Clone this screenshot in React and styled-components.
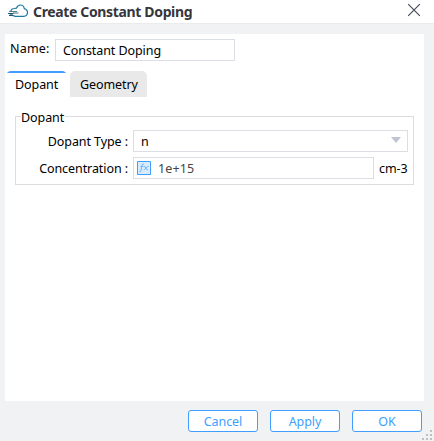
import React from "react";
import styled, { createGlobalStyle } from "styled-components";

const GlobalStyle = createGlobalStyle`
  * { box-sizing: border-box; }
  body { margin: 0; background: #f0f2f4; }
  button, input { font: inherit; letter-spacing: inherit; }
`;

const Dialog = styled.div`
  width: 434px;
  height: 441px;
  display: flex;
  flex-direction: column;
  position: relative;
  overflow: hidden;
  background: #f0f2f4;
  color: #000;
  font: 12.5px/20px "Noto Sans", "Open Sans", sans-serif;
  letter-spacing: -0.08px;
  white-space: nowrap;
`;

const TitleBar = styled.header`
  height: 24px;
  flex: none;
  display: flex;
  align-items: flex-start;
  padding: 0 13px 0 8px;
  background: #fff;
  border-bottom: 1px solid #e9ebed;
`;

const Title = styled.h1`
  margin: 2px auto 0 4px;
  font-size: 14px;
  line-height: 20px;
  font-weight: 700;
  letter-spacing: -0.35px;
  color: #36363d;
`;

const CloudIcon = styled.svg`
  margin-top: 4px;
  width: 21px;
  height: 14px;
`;

const CloseButton = styled.button`
  width: 14px;
  height: 14px;
  margin-top: 3px;
  padding: 0;
  border: 0;
  background: none;
  display: flex;
`;

const Panel = styled.main`
  flex: none;
  width: 419px;
  height: 367px;
  margin: 10px 0 0 5px;
  padding-top: 5px;
  background: #fff;
`;

const NameRow = styled.div`
  display: flex;
  padding-left: 5px;
`;

const NameLabel = styled.label`
  width: 45px;
  letter-spacing: 0.2px;
`;

const Field = styled.div`
  width: ${(p) => p.$width}px;
  height: 22px;
  display: flex;
  align-items: center;
  padding: ${(p) => p.$pad || "2px 7px 0"};
  border: 1px solid #dcdee6;
  background: #fff;
  color: ${(p) => p.$color || "#000"};
`;

const Value = styled.span`
  padding-top: 2px;
  letter-spacing: 0.15px;
`;

const TabList = styled.div`
  display: flex;
  gap: 3px;
  margin: 10px 0 0 1px;
`;

const Tab = styled.div`
  width: ${(p) => p.$width}px;
  height: 26px;
  padding: 4px 0 0 ${(p) => (p.$active ? 9 : 10)}px;
  border-radius: 5px 5px 0 0;
  overflow: hidden;
  background: ${(p) =>
    p.$active ? "linear-gradient(#409eff 2px, #fff 2px)" : "#e9e9e9"};
`;

const Group = styled.fieldset`
  width: 399px;
  height: 74px;
  margin: 14px 0 0 10px;
  padding: 0 5px 0 0;
  border: 1px solid #dcdcde;
`;

const Legend = styled.legend`
  height: 11px;
  margin-left: 5px;
  padding: 0 1px 0 0;
  line-height: 13px;
`;

const FormRow = styled.div`
  display: flex;
  align-items: center;
  height: 22px;
  margin-top: ${(p) => p.$top}px;
`;

const RowLabel = styled.label`
  width: 112px;
  margin-right: 5px;
  padding-top: 2px;
  text-align: right;
`;

const Arrow = styled.svg`
  width: 10px;
  height: 6px;
  margin: -5px 0 0 auto;
`;

const FormulaIcon = styled.svg`
  width: 14px;
  height: 14px;
  margin-right: 7px;
`;

const Unit = styled.span`
  margin-left: 5px;
  padding-top: 2px;
`;

const Footer = styled.footer`
  display: flex;
  gap: 12px;
  justify-content: flex-end;
  padding: 9px 12px 0 0;
`;

const Button = styled.button`
  width: 70px;
  height: 22px;
  padding: 1px 0 0;
  border: 1px solid #409eff;
  border-radius: 3px;
  background: #fff;
  color: #409eff;
  line-height: 19px;
`;

const Grip = styled.svg`
  position: absolute;
  right: 2px;
  bottom: 1px;
  width: 10px;
  height: 10px;
`;

export default function App() {
  return (
    <>
      <GlobalStyle />
      <Dialog>
        <TitleBar>
          <CloudIcon viewBox="0 0 21 14" fill="none">
            <path
              d="M2.8 7.2Q3.4 4.6 6.2 4.5L8.4 4.2Q9.6 1 12.4 1Q15.6 1 16.3 4.6Q19.6 5.4 19.5 8.8Q19.2 12.3 15.8 12.3H7.2L2.4 10.6"
              stroke="#1e78a5"
              strokeWidth="1.2"
            />
            <path d="M1 7.5H9" stroke="#4e8299" strokeWidth="1" />
            <path d="M0 9.5H6M1 11.4H5" stroke="#245268" strokeWidth="1.1" />
            <path d="M5 9H10.5" stroke="#8299a6" strokeWidth="1.4" />
          </CloudIcon>
          <Title>Create Constant Doping</Title>
          <CloseButton aria-label="Close">
            <svg width="14" height="14" viewBox="0 0 14 14">
              <path d="M1.2 1.2 12.8 12.8M12.8 1.2 1.2 12.8" stroke="#444b59" strokeWidth="1.2" />
            </svg>
          </CloseButton>
        </TitleBar>
        <Panel>
          <NameRow>
            <NameLabel>Name:</NameLabel>
            <Field $width={180}>Constant Doping</Field>
          </NameRow>
          <TabList>
            <Tab $width={61} $active>Dopant</Tab>
            <Tab $width={77}>Geometry</Tab>
          </TabList>
          <Group>
            <Legend>Dopant</Legend>
            <FormRow $top={8}>
              <RowLabel>Dopant Type :</RowLabel>
              <Field $width={275} $pad="2px 6px 0 7px">
                n
                <Arrow viewBox="0 0 10 6">
                  <path d="M0 0H10L5 6Z" fill="#bfc4d0" />
                </Arrow>
              </Field>
            </FormRow>
            <FormRow $top={5}>
              <RowLabel>Concentration :</RowLabel>
              <Field $width={241} $pad="0 3px" $color="#444">
                <FormulaIcon viewBox="0 0 14 14" fill="none">
                  <path d="M.5.5H13.5V13.5H.5Z" fill="#d9ecff" stroke="#409eff" />
                  <path
                    d="M7 3Q5.6 2.3 5 4.5L4 9.5Q3.6 11.5 2.4 10.8M3.4 5.5H6.4M7 5.5Q8.2 5 8.8 7T10.8 9M11.6 5.5Q10.6 5 9 7T6.8 9"
                    stroke="#6fb4fa"
                    strokeWidth="1"
                  />
                </FormulaIcon>
                <Value>1e+15</Value>
              </Field>
              <Unit>cm-3</Unit>
            </FormRow>
          </Group>
        </Panel>
        <Footer>
          <Button>Cancel</Button>
          <Button>Apply</Button>
          <Button>OK</Button>
        </Footer>
        <Grip viewBox="0 0 10 10" fill="#bfbfbf">
          <path d="M8 0h2v2H8zM4 4h2v2H4zM8 4h2v2H8zM0 8h2v2H0zM4 8h2v2H4zM8 8h2v2H8z" />
        </Grip>
      </Dialog>
    </>
  );
}
